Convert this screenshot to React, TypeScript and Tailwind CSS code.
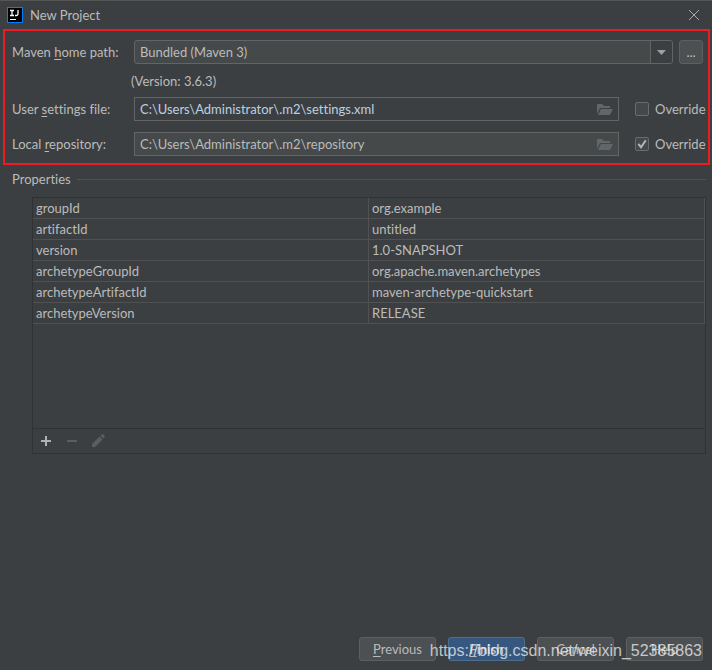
import * as React from 'react';

const properties = [
  { name: 'groupId', value: 'org.example' },
  { name: 'artifactId', value: 'untitled' },
  { name: 'version', value: '1.0-SNAPSHOT' },
  { name: 'archetypeGroupId', value: 'org.apache.maven.archetypes' },
  { name: 'archetypeArtifactId', value: 'maven-archetype-quickstart' },
  { name: 'archetypeVersion', value: 'RELEASE' },
];

const Mnemonic: React.FC<{ before?: string; letter: string; after: string }> = ({
  before = '',
  letter,
  after,
}) => (
  <span>
    {before}
    <span className="underline underline-offset-2">{letter}</span>
    {after}
  </span>
);

const FolderIcon: React.FC = () => (
  <svg width="16" height="12" viewBox="0 0 16 12" fill="#616669" aria-hidden="true">
    <path d="M0 10V0h5l2 2h6v2H3z" />
    <path d="M4 5h12l-3 6H1z" />
  </svg>
);

interface PathRowProps {
  id: string;
  label: React.ReactNode;
  path: string;
  overridden: boolean;
}

const PathRow: React.FC<PathRowProps> = ({ id, label, path, overridden }) => {
  const [checked, setChecked] = React.useState(overridden);
  const [value, setValue] = React.useState(path);

  return (
    <div className="flex h-6 items-center">
      <label htmlFor={id} className="w-[122px] shrink-0">
        {label}
      </label>
      <div className="relative h-6 min-w-0 flex-1">
        <input
          id={id}
          type="text"
          value={value}
          onChange={(e) => setValue(e.target.value)}
          className={`block h-6 w-full border border-[#646464] pr-7 pb-px pl-[5px] outline-none ${
            overridden ? 'bg-[#45494a] text-[#bbbbbb]' : 'bg-[#3c3f41] text-[#bcd0e0]'
          }`}
        />
        <button type="button" aria-label="Browse" className="absolute top-[7px] right-[6px]">
          <FolderIcon />
        </button>
      </div>
      <label className="ml-4 flex w-[73px] shrink-0 items-center gap-[6px]">
        <span className="relative h-[14px] w-[14px] shrink-0">
          <input
            type="checkbox"
            checked={checked}
            onChange={(e) => setChecked(e.target.checked)}
            className="block h-[14px] w-[14px] appearance-none rounded-xs border border-[#6b6b6b] bg-[#43494a]"
          />
          {checked && (
            <svg
              className="pointer-events-none absolute inset-0"
              width="14"
              height="14"
              viewBox="0 0 14 14"
              fill="none"
              stroke="#b4b4b4"
              strokeWidth="2"
              aria-hidden="true"
            >
              <path d="M3.300 6.800l2.700 3.400 4.800-7" />
            </svg>
          )}
        </span>
        <span>Override</span>
      </label>
    </div>
  );
};

const buttonBase = 'h-6 w-[77px] rounded-[3px] border leading-5';
const plainButton = `${buttonBase} border-[#5e6060] bg-[#4c5052]`;

export default function App() {
  return (
    <main className="flex min-h-screen flex-col border-t border-[#555555] bg-[#3c3f41] font-['Lato',sans-serif] text-[13px] leading-5 text-[#bbbbbb] [font-variant-ligatures:none]">
      {/* Title bar */}
      <header className="flex h-7 items-center pr-3 pl-[7px]">
        <svg width="16" height="16" viewBox="0 0 16 16" aria-hidden="true">
          <rect width="16" height="16" fill="#087cfa" />
          <rect x="1" y="1" width="14" height="14" fill="#000" />
          <path
            d="M3 3.500h4M5 3.500v5M3 8.500h4M11 3v4q0 1.500-1.500 1.500H8"
            fill="none"
            stroke="#fff"
            strokeWidth="1.300"
          />
          <path d="M3 12h6v1H3z" fill="#fff" />
        </svg>
        <h1 className="ml-[7px] flex-1">New Project</h1>
        <button type="button" aria-label="Close">
          <svg width="12" height="12" viewBox="0 0 12 12" stroke="#a9abac" aria-hidden="true">
            <path d="M1 1l10 10M11 1L1 11" />
          </svg>
        </button>
      </header>

      {/* Maven settings */}
      <section className="mr-[2px] ml-[3px] border-2 border-[#ed1c24] pt-[9px] pb-[7px] pl-[7px]">
        <div className="flex h-6 items-center pr-[5px]">
          <label htmlFor="maven-home" className="w-[122px] shrink-0">
            <Mnemonic before="Maven " letter="h" after="ome path:" />
          </label>
          <div className="relative h-6 min-w-0 flex-1">
            <select
              id="maven-home"
              className="block h-6 w-full appearance-none rounded-[3px] border border-[#646464] bg-[#45494a] pb-px pl-[5px] outline-none"
            >
              <option>Bundled (Maven 3)</option>
            </select>
            <span className="pointer-events-none absolute inset-y-px right-px flex w-[22px] items-center justify-center rounded-r-xs border-l border-[#646464] bg-[#3c3f41]">
              <svg width="9" height="5" viewBox="0 0 9 5" fill="#9da0a2" aria-hidden="true">
                <path d="M0 0h9L4.500 5z" />
              </svg>
            </span>
          </div>
          <button
            type="button"
            aria-label="Choose Maven home"
            className="ml-[6px] h-6 w-6 rounded-[3px] border border-[#5e6060] bg-[#4c5052] leading-5"
          >
            ...
          </button>
        </div>
        <p className="ml-[119px] flex h-[33px] items-center">(Version: 3.6.3)</p>
        <div className="flex flex-col gap-[11px]">
          <PathRow
            id="settings-file"
            label={<Mnemonic before="User " letter="s" after="ettings file:" />}
            path="C:\Users\Administrator\.m2\settings.xml"
            overridden={false}
          />
          <PathRow
            id="local-repository"
            label={<Mnemonic before="Local " letter="r" after="epository:" />}
            path="C:\Users\Administrator\.m2\repository"
            overridden
          />
        </div>
      </section>

      {/* Properties */}
      <section className="pr-[6px] pl-3">
        <div className="mt-1 flex items-center gap-[6px]">
          <h2>Properties</h2>
          <span className="h-px flex-1 bg-[#515151]" />
        </div>
        <div className="mt-2 ml-5 border border-[#323232]">
          <div className="h-[230px]">
            <table className="w-full table-fixed border-separate border-spacing-0">
              <tbody>
                {properties.map((property) => (
                  <tr key={property.name}>
                    <td className="h-[21px] border-r border-b border-[#515151] p-0 pl-[3px]">
                      {property.name}
                    </td>
                    <td className="h-[21px] border-r border-b border-[#515151] p-0 pl-[3px]">
                      {property.value}
                    </td>
                  </tr>
                ))}
              </tbody>
            </table>
          </div>
          <div className="flex h-[25px] items-center gap-3 border-t border-[#323232] pl-[6px]">
            <button type="button" aria-label="Add">
              <svg width="14" height="14" viewBox="0 0 14 14" fill="#afb1b3" aria-hidden="true">
                <path d="M6 2h2v4h4v2H8v4H6V8H2V6h4z" />
              </svg>
            </button>
            <button type="button" aria-label="Remove" disabled>
              <svg width="14" height="14" viewBox="0 0 14 14" fill="#5b5d5f" aria-hidden="true">
                <path d="M2 6h10v2H2z" />
              </svg>
            </button>
            <button type="button" aria-label="Edit" disabled>
              <svg width="14" height="14" viewBox="0 0 14 14" fill="#5b5d5f" aria-hidden="true">
                <path d="M1 10l7.500-7.500 3 3L4 13H1zM9.500 1.700L10.700.5q.8-.8 1.600 0l1.200 1.200q.8.8 0 1.600l-1.100 1.200z" />
              </svg>
            </button>
          </div>
        </div>
      </section>

      {/* Dialog buttons */}
      <footer className="relative mt-auto flex justify-end gap-3 pt-6 pr-[9px] pb-[9px]">
        <button type="button" className={plainButton}>
          <Mnemonic letter="P" after="revious" />
        </button>
        <button
          type="button"
          className={`${buttonBase} border-[#4c708c] bg-[#365880] font-bold`}
        >
          <Mnemonic letter="F" after="inish" />
        </button>
        <button type="button" className={plainButton}>
          Cancel
        </button>
        <button type="button" className={plainButton}>
          Help
        </button>
        <span className="pointer-events-none absolute right-[10px] bottom-[7px] font-['Liberation_Sans',sans-serif] text-base text-white/70">
          https://blog.csdn.net/weixin_52385863
        </span>
      </footer>
    </main>
  );
}
